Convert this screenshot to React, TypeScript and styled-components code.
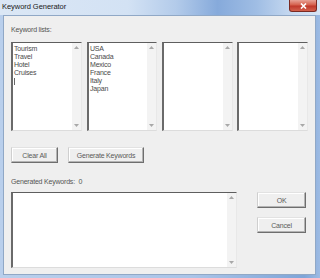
import React from "react";
import styled, { createGlobalStyle } from "styled-components";

const Global = createGlobalStyle`
  html, body { margin: 0; padding: 0; background: #ffffff; }
  body { font-family: "Liberation Sans", Arial, sans-serif; }
  * { box-sizing: border-box; }
`;

const Window = styled.div`
  width: 320px;
  height: 278px;
  display: flex;
  flex-direction: column;
  background: linear-gradient(90deg, #b9cfec 0%, #aac4e8 60%, #7fa5d8 95%, #9dbbe3 100%);
  overflow: hidden;
`;

const TitleBar = styled.div`
  height: 15px;
  flex: none;
  display: flex;
  align-items: flex-start;
  justify-content: space-between;
  padding: 0 3px 0 2px;
  background: linear-gradient(90deg, #dbe7f5 0%, #d3e2f4 40%, #b3cbea 55%, #86aadb 68%, #9fbde4 80%, #c9dbf1 92%, #d6e4f4 100%);
`;

const Title = styled.span`
  font-size: 7.5px;
  line-height: 13px;
  color: #1a1a1a;
  letter-spacing: -0.05px;
`;

const CloseButton = styled.div`
  width: 28px;
  height: 12px;
  border: 1px solid #7a2a22;
  border-top: none;
  border-radius: 0 0 3px 3px;
  background: linear-gradient(180deg, #e7a296 0%, #d5604c 45%, #c0392b 55%, #d2604c 100%);
  display: flex;
  align-items: center;
  justify-content: center;
`;

const Frame = styled.div`
  flex: 1;
  display: flex;
  padding: 0 4px 3px 3px;
`;

const Client = styled.div`
  flex: 1;
  background: #efefef;
  border: 1px solid #90a8c6;
  padding: 10px 0 0 7px;
  display: flex;
  flex-direction: column;
  font-size: 7px;
  color: #555555;
  letter-spacing: -0.2px;
`;

const Label = styled.div<{ $mt?: number }>`
  height: 8px;
  line-height: 8px;
  margin-top: ${(p) => p.$mt ?? 0}px;
  white-space: pre;
`;

const ListRow = styled.div`
  display: flex;
  margin-top: 8px;
`;

const ListBox = styled.div<{ $w: number; $gap: number }>`
  width: ${(p) => p.$w}px;
  height: 89px;
  margin-right: ${(p) => p.$gap}px;
  display: flex;
  background: #ffffff;
  border-top: 1px solid #5e5e5e;
  border-left: 2px solid #6a6a6a;
  border-right: 1px solid #e8e8e8;
  border-bottom: 1px solid #dcdcdc;
`;

const ListItems = styled.div`
  flex: 1;
  padding: 2px 0 0 1px;
  display: flex;
  flex-direction: column;
  color: #4a4a4a;
`;

const Item = styled.div`
  height: 8px;
  line-height: 8px;
  white-space: nowrap;
`;

const Caret = styled.div`
  width: 1px;
  height: 7px;
  margin-top: 1px;
  background: #666;
`;

const ScrollTrack = styled.div`
  width: 9px;
  flex: none;
  background: #f3f3f3;
  display: flex;
  flex-direction: column;
  justify-content: space-between;
  align-items: center;
  padding: 3px 0 3px;
`;

const Arrow = styled.svg`
  display: block;
`;

const ButtonRow = styled.div`
  display: flex;
  gap: 10px;
  margin-top: 16px;
`;

const Button = styled.div<{ $w: number }>`
  width: ${(p) => p.$w}px;
  height: 16px;
  display: flex;
  align-items: center;
  justify-content: center;
  background: #efefef;
  border-top: 1px solid #e2e2e2;
  border-left: 1px solid #cfcfcf;
  border-right: 1px solid #6e6e6e;
  border-bottom: 1px solid #6e6e6e;
  box-shadow: inset -1px -1px 0 #b4b4b4, inset 1px 1px 0 #ffffff;
  color: #5a5a5a;
`;

const BottomRow = styled.div`
  display: flex;
  margin-top: 6px;
`;

const TextArea = styled.div`
  width: 226px;
  height: 76px;
  display: flex;
  background: #ffffff;
  border-top: 1px solid #5e5e5e;
  border-left: 2px solid #6a6a6a;
  border-right: 1px solid #e8e8e8;
  border-bottom: 1px solid #dcdcdc;
`;

const SideButtons = styled.div`
  display: flex;
  flex-direction: column;
  gap: 9px;
  margin-left: 20px;
`;

const Up = () => (
  <Arrow width="5" height="3" viewBox="0 0 5 3">
    <path d="M0 3 L2.5 0 L5 3 Z" fill="#a8a8a8" />
  </Arrow>
);
const Down = () => (
  <Arrow width="5" height="3" viewBox="0 0 5 3">
    <path d="M0 0 L2.5 3 L5 0 Z" fill="#a8a8a8" />
  </Arrow>
);

const Scroll = () => (
  <ScrollTrack>
    <Up />
    <Down />
  </ScrollTrack>
);

const lists: { items: string[]; w: number; gap: number; caret?: boolean }[] = [
  { items: ["Tourism", "Travel", "Hotel", "Cruises"], w: 71, gap: 5, caret: true },
  { items: ["USA", "Canada", "Mexico", "France", "Italy", "Japan"], w: 70, gap: 5 },
  { items: [], w: 71, gap: 4 },
  { items: [], w: 71, gap: 0 },
];

export default function App() {
  return (
    <>
      <Global />
      <Window>
        <TitleBar>
          <Title>Keyword Generator</Title>
          <CloseButton>
            <svg width="7" height="6" viewBox="0 0 7 6">
              <path d="M1 0.5 L6 5.5 M6 0.5 L1 5.5" stroke="#ffffff" strokeWidth="1.6" />
            </svg>
          </CloseButton>
        </TitleBar>
        <Frame>
          <Client>
            <Label>Keyword lists:</Label>
            <ListRow>
              {lists.map((l, i) => (
                <ListBox key={i} $w={l.w} $gap={l.gap}>
                  <ListItems>
                    {l.items.map((t) => (
                      <Item key={t}>{t}</Item>
                    ))}
                    {l.caret && <Caret />}
                  </ListItems>
                  <Scroll />
                </ListBox>
              ))}
            </ListRow>
            <ButtonRow>
              <Button $w={47}>Clear All</Button>
              <Button $w={76}>Generate Keywords</Button>
            </ButtonRow>
            <Label $mt={15}>{"Generated Keywords:  0"}</Label>
            <BottomRow>
              <TextArea>
                <ListItems />
                <Scroll />
              </TextArea>
              <SideButtons>
                <Button $w={49}>OK</Button>
                <Button $w={49}>Cancel</Button>
              </SideButtons>
            </BottomRow>
          </Client>
        </Frame>
      </Window>
    </>
  );
}
